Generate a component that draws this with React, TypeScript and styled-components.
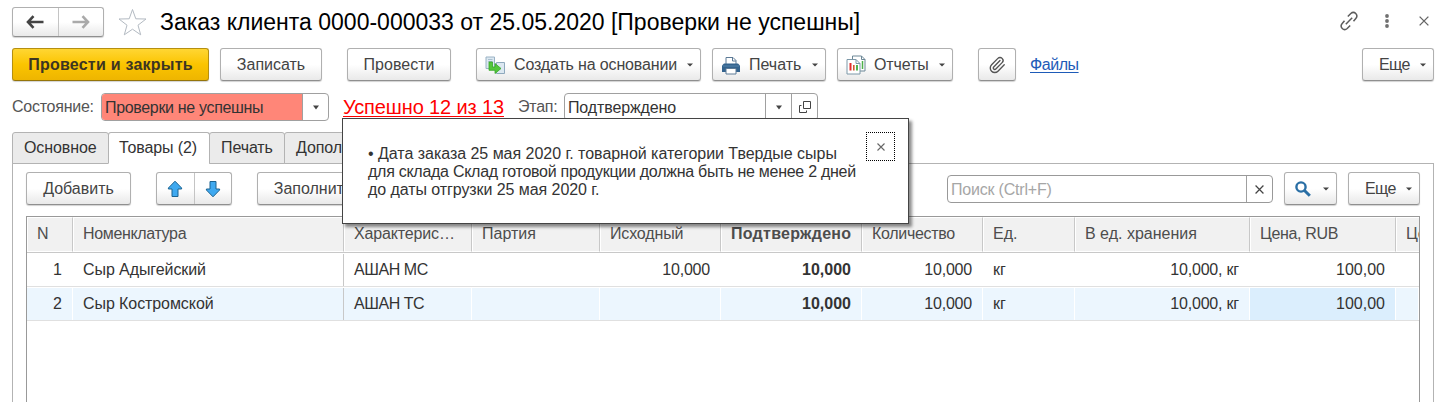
import React from "react";
import styled, { createGlobalStyle, css } from "styled-components";
import { Paperclip } from "lucide-react";

const GlobalStyle = createGlobalStyle`
  *, *::before, *::after { box-sizing: border-box; }
  html, body { margin: 0; padding: 0; background: #fff; overflow: hidden; }
  body { font-family: "Liberation Sans", Arial, sans-serif; font-size: 16px; color: #444; }
  svg { flex: none; }
`;

const Window = styled.div`
  position: relative;
  display: flex;
  flex-direction: column;
  width: 1447px;
  height: 402px;
  padding: 7px 13px 0 12px;
  overflow: hidden;
  background: #fff;
`;

const TitleBar = styled.header`
  display: flex;
  align-items: center;
  height: 30px;
`;

const Title = styled.h1`
  flex: 1;
  margin: 0 0 0 12px;
  font-size: 23px;
  font-weight: 400;
  line-height: 30px;
  color: #000;
  white-space: nowrap;
`;

const raised = css`
  border: 1px solid #b0b0b0;
  border-bottom-color: #8f8f8f;
  border-radius: 3px;
  background: linear-gradient(#fff 0%, #fff 50%, #e9e9e9 100%);
  box-shadow: 0 1px 1px rgba(0, 0, 0, 0.18);
`;

const ButtonPair = styled.div<{ $width: number; $height: number; $gap?: number }>`
  ${raised}
  display: flex;
  flex: none;
  width: ${(p) => p.$width}px;
  height: ${(p) => p.$height}px;
  margin-left: ${(p) => p.$gap ?? 0}px;
`;

const PairHalf = styled.button`
  display: flex;
  flex: 1;
  align-items: center;
  justify-content: center;
  padding: 0;
  border: 0;
  background: none;
  & + & { border-left: 1px solid #c4c4c4; }
`;

const StarIcon = styled.svg`
  margin-left: 14px;
`;

const WindowActions = styled.div`
  display: flex;
  align-items: center;
  margin-right: 5px;
  padding-bottom: 3px;
  & > :nth-child(2) { margin: 0 29px 0 25px; }
`;

const CommandBar = styled.div`
  display: flex;
  height: 33px;
  margin-top: 11px;
`;

const Button = styled.button<{ $width: number; $gap?: number; $primary?: boolean }>`
  ${raised}
  display: flex;
  flex: none;
  align-items: center;
  justify-content: center;
  width: ${(p) => p.$width}px;
  height: 33px;
  margin-left: ${(p) => p.$gap ?? 0}px;
  padding: 1px 0 0;
  font: 400 16px/18px "Liberation Sans", Arial, sans-serif;
  color: #444;
  white-space: nowrap;
  ${(p) =>
    p.$primary &&
    css`
      font-weight: 700;
      letter-spacing: 0.23px;
      color: #3d3522;
      border-color: #b58f10;
      border-bottom-color: #94740a;
      background: linear-gradient(#ffd633 0%, #fbc400 50%, #eeb500 100%);
    `}
`;

const MenuButton = styled(Button)`
  justify-content: flex-start;
  padding-left: 8px;
  padding-right: 7px;
`;

const Caption = styled.span<{ $spacing?: number }>`
  flex: 1;
  margin-left: 8px;
  letter-spacing: ${(p) => p.$spacing ?? 0}px;
  text-align: left;
`;

const FilesLink = styled.a`
  margin-left: 14px;
  padding-top: 8px;
  line-height: 18px;
  letter-spacing: -0.45px;
  color: #1e5bb8;
  text-decoration: underline;
  text-underline-offset: 2px;
`;

const Spacer = styled.div`
  flex: 1;
`;

const StatusRow = styled.div`
  display: flex;
  align-items: center;
  height: 28px;
  margin-top: 12px;
`;

const Label = styled.label<{ $width: number }>`
  width: ${(p) => p.$width}px;
  letter-spacing: -0.25px;
  color: #555;
  white-space: nowrap;
`;

const Field = styled.div<{ $width: number }>`
  display: flex;
  width: ${(p) => p.$width}px;
  height: 28px;
  overflow: hidden;
  border: 1px solid #a0a0a0;
  border-radius: 4px;
  background: #fff;
`;

const FieldValue = styled.div<{ $danger?: boolean; $muted?: boolean; $spacing: number }>`
  flex: 1;
  padding-left: 3px;
  line-height: 27px;
  letter-spacing: ${(p) => p.$spacing}px;
  white-space: nowrap;
  color: ${(p) => (p.$muted ? "#a6a6a6" : "#333")};
  background: ${(p) => (p.$danger ? "#ff8678" : "transparent")};
`;

const FieldButton = styled.div`
  display: flex;
  flex: none;
  align-items: center;
  justify-content: center;
  width: 26px;
  border-left: 1px solid #a0a0a0;
`;

const CheckLink = styled.a`
  width: 175px;
  margin-left: 14px;
  font-size: 20px;
  line-height: 22px;
  letter-spacing: -0.13px;
  color: #f00;
  white-space: nowrap;
  text-decoration: underline;
  text-decoration-thickness: 1px;
  text-underline-offset: 2px;
  text-decoration-skip-ink: none;
`;

const Tabs = styled.nav`
  display: flex;
  height: 32px;
  margin-top: 11px;
`;

const Tab = styled.div<{ $width: number; $active?: boolean }>`
  z-index: 1;
  width: ${(p) => p.$width}px;
  height: 32px;
  margin-right: -1px;
  padding-left: ${(p) => (p.$active ? 10 : 11)}px;
  border: 1px solid #b3b3b3;
  border-bottom-color: ${(p) => (p.$active ? "#fff" : "#b3b3b3")};
  border-radius: 3px 3px 0 0;
  background: ${(p) => (p.$active ? "#fff" : "#ebebeb")};
  line-height: 30px;
  letter-spacing: -0.1px;
  color: #333;
  white-space: nowrap;
`;

const Panel = styled.section`
  flex: none;
  height: 250px;
  margin-top: -1px;
  padding: 8px 13px 0;
  border: 1px solid #b3b3b3;
`;

const PanelBar = styled.div`
  display: flex;
  align-items: flex-start;
  height: 44px;
`;

const SearchField = styled(Field)`
  margin-top: 3px;
  border-color: #999;
`;

const SearchButton = styled(MenuButton)`
  padding-left: 10px;
`;

const Table = styled.div`
  height: 220px;
  overflow: hidden;
  border: 1px solid #999;
`;

const columns = "46px 271px 128px 128px 121px 141px 121px 92px 175px 146px 23px";

const HeaderRow = styled.div`
  display: grid;
  grid-template-columns: ${columns};
  height: 36px;
  border-bottom: 1px solid #c8c8c8;
`;

const HeaderCell = styled.div<{ $bold?: boolean; $spacing: number }>`
  overflow: hidden;
  padding-left: 9px;
  border: 1px solid #fff;
  border-right-color: #c8c8c8;
  background: #f1f1f1;
  line-height: 31px;
  letter-spacing: ${(p) => p.$spacing}px;
  font-weight: ${(p) => (p.$bold ? 700 : 400)};
  color: #4d4d4d;
  white-space: nowrap;
  &:last-child { border-right: 0; }
`;

const Row = styled.div<{ $selected?: boolean }>`
  display: grid;
  grid-template-columns: ${columns};
  height: 34px;
  padding: 1px 0;
  border-bottom: 1px solid #e0e0e0;
  background: #fff;
  & > div { background-color: ${(p) => (p.$selected ? "#ecf6fe" : "#fff")}; }
`;

const Cell = styled.div<{ $right?: boolean; $bold?: boolean; $fixed?: boolean; $current?: boolean; $spacing: number }>`
  padding: 0 10px;
  border-right: 1px solid #fff;
  line-height: 32px;
  letter-spacing: ${(p) => p.$spacing}px;
  font-weight: ${(p) => (p.$bold ? 700 : 400)};
  text-align: ${(p) => (p.$right ? "right" : "left")};
  color: #333;
  white-space: nowrap;
  ${(p) => p.$fixed && css`border-right-color: #c8c8c8;`}
  ${(p) => p.$current && css`&& { background-color: #dbeefd; }`}
`;

const Popup = styled.aside`
  position: absolute;
  z-index: 5;
  left: 342px;
  top: 118px;
  display: flex;
  justify-content: space-between;
  width: 567px;
  height: 106px;
  padding: 13px 13px 0 25px;
  border: 1px solid #444;
  background: #fff;
  box-shadow: 3px 3px 3px rgba(0, 0, 0, 0.45);
`;

const Message = styled.div`
  padding-top: 13px;
`;

const MessageLine = styled.p<{ $spacing: number }>`
  margin: 0;
  line-height: 18px;
  letter-spacing: ${(p) => p.$spacing}px;
  color: #333;
  white-space: nowrap;
`;

const CloseButton = styled.button`
  display: flex;
  flex: none;
  align-items: center;
  justify-content: center;
  width: 29px;
  height: 29px;
  padding: 0;
  border: 1px dotted #000;
  background: #fff;
`;

const Caret = () => (
  <svg width="6" height="4" viewBox="0 0 6 4"><path d="M0 .5h6L3 3.5z" fill="#444" /></svg>
);

const FieldCaret = () => (
  <svg width="8" height="5" viewBox="0 0 8 5"><path d="M1 .5h6L4 4.500z" fill="#444" /></svg>
);

const Cross = ({ size, color = "#666" }: { size: number; color?: string }) => (
  <svg width={size} height={size} viewBox="0 0 8 8"><path d="M.5.5l7 7M7.5.5l-7 7" stroke={color} strokeWidth="1.1" fill="none" /></svg>
);

const NavArrow = ({ color, flip }: { color: string; flip?: boolean }) => (
  <svg width="18" height="14" viewBox="0 0 18 14">
    <g transform={flip ? "matrix(-1 0 0 1 18 0)" : undefined}>
      <path d="M7.500 1.200L2 7l5.500 5.800M2.500 7H17.500" stroke={color} strokeWidth="2.600" fill="none" />
    </g>
  </svg>
);

const BlueArrow = ({ down }: { down?: boolean }) => (
  <svg width="16" height="18" viewBox="0 0 16 18">
    <path d="M8 1.200L14.600 8v1H11v7.500H5V9H1.400V8z" transform={down ? "rotate(180 8 9)" : undefined} fill="#3fa9f0" stroke="#1b6391" strokeWidth="1" />
  </svg>
);

const CreateIcon = () => (
  <svg width="21" height="19" viewBox="0 0 21 19">
    <path d="M1 1h8.500v11.500H1z" fill="#dce8f1" stroke="#9ab2c5" />
    <path d="M3 3.500h4.500M3 5.500h4.500" stroke="#a9bfce" />
    <path d="M11.500 6.500h8v11h-8z" fill="#dce8f1" stroke="#8fa9bd" />
    <path d="M4 6h3.500v5H10V7.500l6 5L10 17.500v-3.200H4z" fill="#54c63b" stroke="#36a627" strokeWidth=".8" />
  </svg>
);

const PrintIcon = () => (
  <svg width="20" height="19" viewBox="0 0 20 19">
    <path d="M5 8V1.500h7l3 3V8" fill="#fff" stroke="#5c7a96" />
    <path d="M11.500 1.500v3.500H15" fill="none" stroke="#5c7a96" />
    <path d="M1 9.500L3 7.500h14l2 2V16H1z" fill="#33638e" />
    <path d="M2 10h16" stroke="#5685ab" />
    <path d="M5 12.500h10v5.500H5z" fill="#fff" stroke="#5c7a96" />
  </svg>
);

const ReportIcon = () => (
  <svg width="20" height="20" viewBox="0 0 20 20">
    <path d="M6.500 1h9l3.500 3.500V16H6.500z" fill="#fff" stroke="#6c8796" />
    <path d="M15.500 1v3.500H19" fill="none" stroke="#6c8796" />
    <path d="M16.500 6v8" stroke="#4fb04a" strokeWidth="1.500" />
    <path d="M1 4.500h9l4 4V19H1z" fill="#fff" stroke="#7d98a8" />
    <path d="M10 4.500v4h4" fill="none" stroke="#7d98a8" />
    <path d="M4.500 8v7.500" stroke="#e22e2e" strokeWidth="2" />
    <path d="M7.800 10v5.500" stroke="#d05a30" strokeWidth="1.600" />
    <path d="M11 10v5.500" stroke="#3eae3b" strokeWidth="1.800" />
  </svg>
);

const LinkIcon = () => (
  <svg width="20" height="20" viewBox="0 0 20 20" fill="none" stroke="#5c5c5c" strokeWidth="1.500">
    <path d="M8.800 5.500L11.800 2.500c3.500-3 8 1.500 5 5L14.500 10.200" />
    <path d="M11.200 14.500L8.200 17.500c-3.500 3-8-1.500-5-5L5.500 9.800" />
    <path d="M6.800 13.200l6.400-6.400" />
  </svg>
);

const DotsIcon = () => (
  <svg width="6" height="16" viewBox="0 0 6 16" fill="#707070">
    <circle cx="3" cy="3" r="1.900" /><circle cx="3" cy="8" r="1.900" /><circle cx="3" cy="13" r="1.900" />
  </svg>
);

const OpenIcon = () => (
  <svg width="12" height="12" viewBox="0 0 12 12" fill="none" stroke="#444">
    <path d="M4.500.5h7v7h-7zM2.500 4.500h-2v7h7v-2" />
  </svg>
);

const SearchIcon = () => (
  <svg width="16" height="16" viewBox="0 0 16 16" fill="none" stroke="#2a6fa5">
    <circle cx="6" cy="6" r="4.600" strokeWidth="2.400" />
    <path d="M9.500 9.500l5.300 5.300" strokeWidth="3" />
  </svg>
);

const headers: [string, number][] = [
  ["N", 0],
  ["Номенклатура", -0.35],
  ["Характерис…", -0.15],
  ["Партия", 0],
  ["Исходный", -0.15],
  ["Подтверждено", 0.28],
  ["Количество", -0.3],
  ["Ед.", 0],
  ["В ед. хранения", 0],
  ["Цена, RUB", -0.35],
  ["Цена", 0],
];

const rows = [
  ["1", "Сыр Адыгейский", "АШАН МС", "", "10,000", "10,000", "10,000", "кг", "10,000, кг", "100,00", ""],
  ["2", "Сыр Костромской", "АШАН ТС", "", "", "10,000", "10,000", "кг", "10,000, кг", "100,00", ""],
];
const cellSpacing = [0, -0.08, -0.45, 0, -0.2, 0, -0.2, 0, -0.2, 0, 0];
const rightAligned = [0, 4, 5, 6, 8, 9];

export default function App() {
  return (
    <Window>
      <GlobalStyle />
      <TitleBar>
        <ButtonPair $width={92} $height={30}>
          <PairHalf><NavArrow color="#444" /></PairHalf>
          <PairHalf><NavArrow color="#aaa" flip /></PairHalf>
        </ButtonPair>
        <StarIcon width="30" height="28" viewBox="0 0 30 28">
          <path d="M14.500 1.500l3.300 9.300 10.200.2-8 6.200 2.700 9.600-8.200-5.600-8.200 5.600L9 17.200 1 11l10.200-.2z" fill="#fff" stroke="#b3bac2" strokeWidth="1" />
        </StarIcon>
        <Title>Заказ клиента 0000-000033 от 25.05.2020 [Проверки не успешны]</Title>
        <WindowActions><LinkIcon /><DotsIcon /><Cross size={10} /></WindowActions>
      </TitleBar>

      <CommandBar>
        <Button $width={197} $primary>Провести и закрыть</Button>
        <Button $width={102} $gap={11}>Записать</Button>
        <Button $width={104} $gap={25}>Провести</Button>
        <MenuButton $width={225} $gap={25}><CreateIcon /><Caption $spacing={-0.15}>Создать на основании</Caption><Caret /></MenuButton>
        <MenuButton $width={114} $gap={11}><PrintIcon /><Caption>Печать</Caption><Caret /></MenuButton>
        <MenuButton $width={116} $gap={11}><ReportIcon /><Caption $spacing={-0.1}>Отчеты</Caption><Caret /></MenuButton>
        <Button $width={38} $gap={25}><Paperclip size={18} strokeWidth={1.8} color="#555" /></Button>
        <FilesLink>Файлы</FilesLink>
        <Spacer />
        <MenuButton $width={72}><Caption $spacing={-0.6}>Еще</Caption><Caret /></MenuButton>
      </CommandBar>

      <StatusRow>
        <Label $width={89}>Состояние:</Label>
        <Field $width={228}>
          <FieldValue $danger $spacing={-0.33}>Проверки не успешны</FieldValue>
          <FieldButton><FieldCaret /></FieldButton>
        </Field>
        <CheckLink>Успешно 12 из 13</CheckLink>
        <Label $width={46}>Этап:</Label>
        <Field $width={254}>
          <FieldValue $spacing={-0.13}>Подтверждено</FieldValue>
          <FieldButton><FieldCaret /></FieldButton>
          <FieldButton><OpenIcon /></FieldButton>
        </Field>
      </StatusRow>

      <Tabs>
        <Tab $width={97}>Основное</Tab>
        <Tab $width={102} $active>Товары (2)</Tab>
        <Tab $width={76}>Печать</Tab>
        <Tab $width={136}>Дополнительно</Tab>
      </Tabs>

      <Panel>
        <PanelBar>
          <Button $width={105}>Добавить</Button>
          <ButtonPair $width={76} $height={33} $gap={25}>
            <PairHalf><BlueArrow /></PairHalf>
            <PairHalf><BlueArrow down /></PairHalf>
          </ButtonPair>
          <Button $width={112} $gap={25}>Заполнить</Button>
          <Spacer />
          <SearchField $width={326}>
            <FieldValue $muted $spacing={-0.2}>Поиск (Ctrl+F)</FieldValue>
            <FieldButton><Cross size={9} color="#444" /></FieldButton>
          </SearchField>
          <SearchButton $width={53} $gap={11}><SearchIcon /><Spacer /><Caret /></SearchButton>
          <MenuButton $width={72} $gap={11}><Caption $spacing={-0.6}>Еще</Caption><Caret /></MenuButton>
        </PanelBar>
        <Table>
          <HeaderRow>
            {headers.map(([text, spacing], i) => (
              <HeaderCell key={i} $bold={i === 5} $spacing={spacing}>{text}</HeaderCell>
            ))}
          </HeaderRow>
          {rows.map((row, r) => (
            <Row key={r} $selected={r === 1}>
              {row.map((value, i) => (
                <Cell key={i} $right={rightAligned.includes(i)} $bold={i === 5} $fixed={i === 1} $current={r === 1 && i === 9} $spacing={cellSpacing[i]}>{value}</Cell>
              ))}
            </Row>
          ))}
        </Table>
      </Panel>

      <Popup>
        <Message>
          <MessageLine $spacing={-0.03}>• Дата заказа 25 мая 2020 г. товарной категории Твердые сыры</MessageLine>
          <MessageLine $spacing={-0.27}>для склада Склад готовой продукции должна быть не менее 2 дней</MessageLine>
          <MessageLine $spacing={-0.07}>до даты отгрузки 25 мая 2020 г.</MessageLine>
        </Message>
        <CloseButton><Cross size={8} /></CloseButton>
      </Popup>
    </Window>
  );
}
